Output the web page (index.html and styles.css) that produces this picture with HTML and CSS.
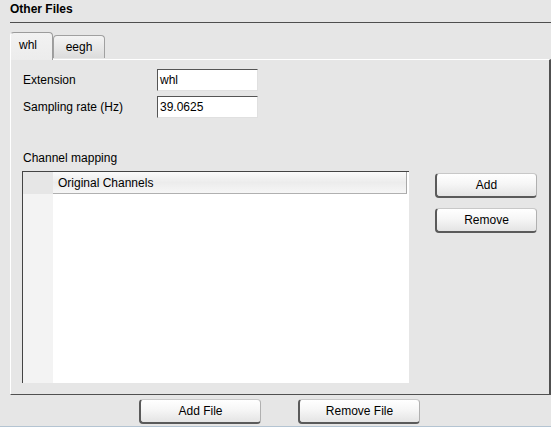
FILE: index.html
```html
<!DOCTYPE html>
<html>
<head>
<meta charset="utf-8">
<link rel="stylesheet" href="styles.css">
</head>
<body>
<div class="window">
  <div class="title">Other Files</div>
  <div class="rule"></div>
  <div class="tabs">
    <div class="tab active">whl</div>
    <div class="tab">eegh</div>
  </div>
  <div class="panel">
    <div class="form-row">
      <label class="label">Extension</label>
      <div class="input">whl</div>
    </div>
    <div class="form-row">
      <label class="label">Sampling rate (Hz)</label>
      <div class="input">39.0625</div>
    </div>
    <div class="section-label">Channel mapping</div>
    <div class="mapping">
      <div class="table">
        <div class="table-head">
          <div class="corner"></div>
          <div class="col-head">Original Channels</div>
        </div>
        <div class="table-body">
          <div class="row-heads"></div>
          <div class="cells"></div>
        </div>
      </div>
      <div class="side-buttons">
        <button class="btn side">Add</button>
        <button class="btn side">Remove</button>
      </div>
    </div>
  </div>
  <div class="footer">
    <button class="btn foot">Add File</button>
    <button class="btn foot">Remove File</button>
  </div>
</div>
</body>
</html>
```

FILE: styles.css
```css
html, body {
  margin: 0;
  padding: 0;
}
body {
  background: #e6e6e6;
  font-family: "Liberation Sans", Arial, sans-serif;
  font-size: 12px;
  color: #000;
}
.window {
  width: 551px;
  height: 427px;
  box-sizing: border-box;
  border-bottom: 1px solid #b4c4d2;
  display: flex;
  flex-direction: column;
}
.title {
  height: 22px;
  box-sizing: border-box;
  padding: 2px 0 0 10px;
  line-height: 14px;
  font-weight: bold;
}
.rule {
  margin-left: 10px;
  height: 1px;
  background: #4e4e4e;
}
.tabs {
  display: flex;
  align-items: flex-end;
  margin: 8px 0 0 10px;
  height: 28px;
}
.tab {
  box-sizing: border-box;
  height: 23px;
  padding: 4px 0 0 0;
  width: 52px;
  text-align: center;
  border: 1px solid #a0a0a0;
  border-bottom: none;
  border-radius: 4px 4px 0 0;
  background: linear-gradient(#f4f4f4, #dcdcdc);
  line-height: 14px;
  margin-bottom: 1px;
}
.tab.active {
  width: 43px;
  height: 28px;
  padding-top: 5px;
  background: linear-gradient(#f2f2f2, #ececec);
  border-color: #9c9c9c;
  border-left: 1px solid #fff;
  margin-bottom: -1px;
  position: relative;
  z-index: 1;
  text-align: left;
  padding-left: 8px;
}
.panel {
  margin-left: 10px;
  height: 336px;
  box-sizing: border-box;
  border-top: 1px solid #fff;
  border-left: 1px solid #fff;
  border-right: 2px solid #505050;
  border-bottom: 1px solid #505050;
  padding: 9px 12px 0 12px;
  display: flex;
  flex-direction: column;
}
.form-row {
  display: flex;
  align-items: center;
  height: 22px;
  margin-bottom: 5px;
}
.label {
  width: 134px;
}
.input {
  box-sizing: border-box;
  width: 101px;
  height: 22px;
  background: #fff;
  border-top: 1px solid #555;
  border-left: 1px solid #555;
  border-right: 1px solid #e0e0e0;
  border-bottom: 1px solid #e0e0e0;
  padding: 3px 0 0 2px;
  line-height: 15px;
}
.section-label {
  margin-top: 28px;
  height: 15px;
  line-height: 14px;
  padding-left: 0;
}
.mapping {
  display: flex;
  margin-top: 5px;
  margin-left: -1px;
}
.table {
  width: 387px;
  height: 212px;
  box-sizing: border-box;
  border-top: 1px solid #444;
  border-left: 1px solid #444;
  background: #fff;
  display: flex;
  flex-direction: column;
}
.table-head {
  display: flex;
  height: 22px;
}
.corner {
  width: 30px;
  background: #e6e6e6;
}
.col-head {
  flex: 1;
  margin-right: 2px;
  box-sizing: border-box;
  background: linear-gradient(#fbfbfb, #ececec 50%, #f6f6f6);
  border-bottom: 1px solid #b0b0b0;
  border-right: 1px solid #a8a8a8;
  padding: 4px 0 0 5px;
  line-height: 14px;
}
.table-body {
  flex: 1;
  display: flex;
}
.row-heads {
  width: 30px;
  background: #f3f3f3;
}
.cells {
  flex: 1;
  background: #fff;
}
.side-buttons {
  display: flex;
  flex-direction: column;
  gap: 10px;
  margin-left: 26px;
  margin-top: 2px;
}
.btn {
  font-family: "Liberation Sans", Arial, sans-serif;
  font-size: 12px;
  color: #000;
  box-sizing: border-box;
  border-radius: 4px;
  border-top: 1px solid #c8c8c8;
  border-right: 1px solid #b0b0b0;
  border-left: 2px solid #5a5a5a;
  border-bottom: 2px solid #5a5a5a;
  background: linear-gradient(#ffffff, #f6f6f6 45%, #e4e4e4);
  padding: 0;
  line-height: 14px;
}
.btn.side {
  width: 102px;
  height: 25px;
}
.footer {
  display: flex;
  padding: 4px 0 0 139px;
  gap: 37px;
}
.btn.foot {
  width: 122px;
  height: 25px;
}
```
